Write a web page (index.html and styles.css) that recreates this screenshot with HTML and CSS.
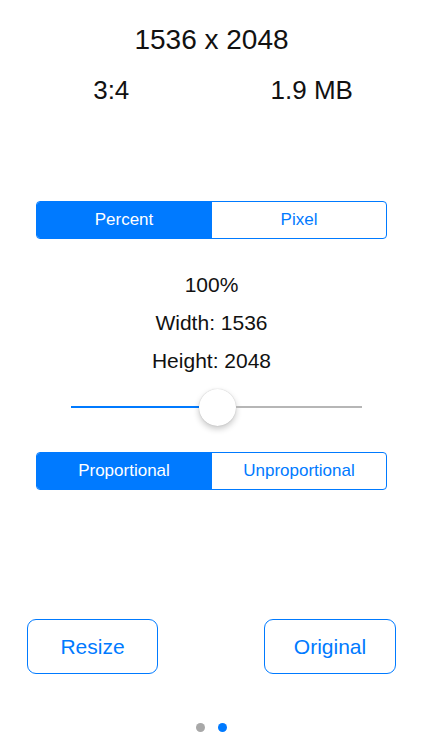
FILE: index.html
```html
<!DOCTYPE html>
<html>
<head>
  <title>Resize</title>
  <link rel="stylesheet" href="styles.css">
</head>
<body>
  <div class="screen">
    <div class="dims">1536 x 2048</div>
    <div class="meta">
      <span>3:4</span>
      <span>1.9 MB</span>
    </div>

    <div class="segmented first">
      <span class="seg active">Percent</span>
      <span class="seg">Pixel</span>
    </div>

    <div class="values">
      <div>100%</div>
      <div>Width: 1536</div>
      <div>Height: 2048</div>
    </div>

    <div class="slider">
      <span class="track filled"></span>
      <span class="thumb"></span>
      <span class="track"></span>
    </div>

    <div class="segmented second">
      <span class="seg active">Proportional</span>
      <span class="seg">Unproportional</span>
    </div>

    <div class="actions">
      <button class="btn">Resize</button>
      <button class="btn">Original</button>
    </div>

    <div class="pager">
      <span class="dot"></span>
      <span class="dot current"></span>
    </div>
  </div>
</body>
</html>
```

FILE: styles.css
```css
body {
  margin: 0;
  background-color: #fff;
  color: #111;
  font-family: "Liberation Sans", Arial, sans-serif;
}
.screen {
  width: 423px;
  height: 750px;
  padding-top: 24px;
  box-sizing: border-box;
}
.dims {
  font-size: 28px;
  line-height: 32px;
  text-align: center;
}
.meta {
  display: grid;
  grid-template-columns: 1fr 1fr;
  padding: 0 11px;
  margin-top: 19px;
  font-size: 26px;
  line-height: 30px;
  text-align: center;
}
.segmented {
  display: flex;
  height: 38px;
  margin: 0 36px;
  border: 1px solid #007aff;
  border-radius: 4px;
  box-sizing: border-box;
  overflow: hidden;
  font-size: 17px;
}
.segmented.first {
  margin-top: 96px;
}
.segmented.second {
  margin-top: 26px;
}
.seg {
  flex: 1;
  display: flex;
  align-items: center;
  justify-content: center;
  color: #007aff;
}
.seg + .seg {
  border-left: 1px solid #007aff;
}
.seg.active {
  background-color: #007aff;
  color: #fff;
}
.values {
  margin-top: 27px;
  font-size: 21px;
  line-height: 38px;
  text-align: center;
}
.slider {
  display: flex;
  align-items: center;
  height: 38px;
  margin: 8px 61px 0 71px;
}
.track {
  flex: 1;
  height: 2px;
  background-color: #b6b6b6;
}
.track.filled {
  flex: 0 0 128px;
  background-color: #007aff;
}
.thumb {
  width: 37px;
  height: 37px;
  border-radius: 50%;
  background-color: #fff;
  box-shadow: 0 3px 6px rgba(0, 0, 0, 0.22), 0 0 1px rgba(0, 0, 0, 0.25);
}
.actions {
  display: flex;
  justify-content: space-between;
  padding: 0 27px;
  margin-top: 129px;
}
.btn {
  width: 131px;
  height: 55px;
  border: 1px solid #007aff;
  border-radius: 9px;
  background-color: #fff;
  color: #007aff;
  font-family: inherit;
  font-size: 21px;
  padding: 0;
}
.btn + .btn {
  width: 132px;
}
.pager {
  display: flex;
  justify-content: center;
  gap: 13px;
  margin-top: 49px;
}
.dot {
  width: 9px;
  height: 9px;
  border-radius: 50%;
  background-color: #a8a8a8;
}
.dot.current {
  background-color: #007aff;
}
```
